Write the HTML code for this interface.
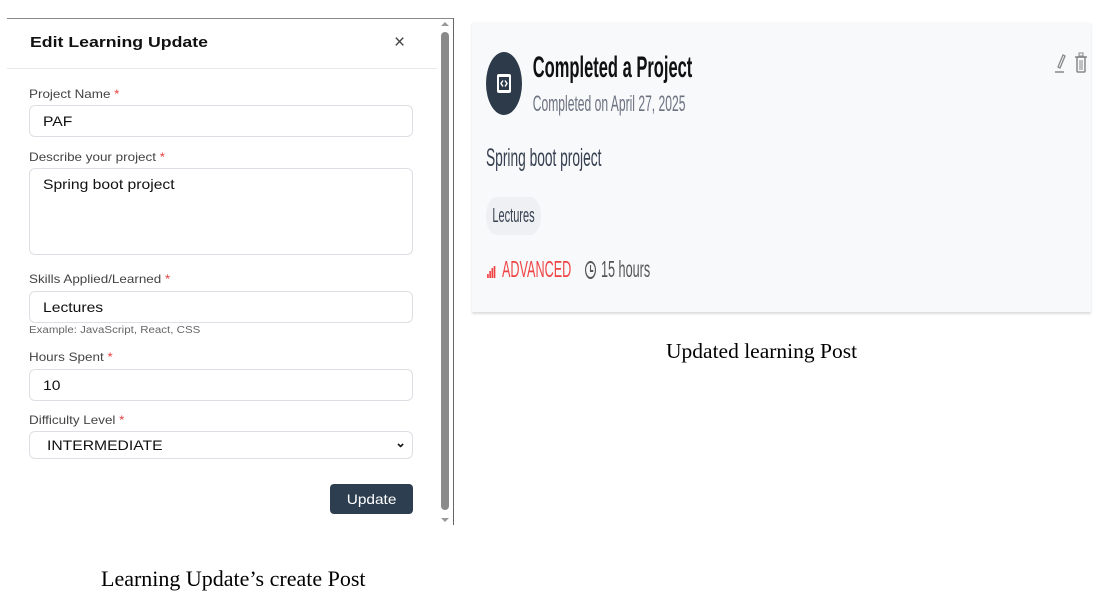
<!DOCTYPE html>
<html><head><style>
*{margin:0;padding:0;box-sizing:border-box}
body{width:1103px;height:581px;background:#fff;position:relative;overflow:hidden;font-family:"Liberation Sans",sans-serif}
.a{position:absolute}
.w{display:inline-block;transform:scaleX(1.12);transform-origin:0 0;white-space:nowrap}
.lbl{position:absolute;left:29px;font-size:12px;color:#444}
.lbl b{color:#e53e3e;font-weight:normal}
.inp{position:absolute;left:29px;width:384px;border:1px solid #dcdfe3;border-radius:6px;background:#fff;font-size:14px;color:#111;padding-left:13px}
</style></head><body>
<div class="a" style="left:7px;top:18px;width:447px;height:1px;background:#888"></div>
<div class="a" style="left:453px;top:18px;width:1px;height:507px;background:#666"></div>
<div class="a" style="left:441px;top:32px;width:8px;height:478px;background:#8a8a8a;border-radius:4px"></div>
<div class="a" style="left:441px;top:22px;width:0;height:0;border-left:4px solid transparent;border-right:4px solid transparent;border-bottom:4px solid #999"></div>
<div class="a" style="left:441px;top:518px;width:0;height:0;border-left:4px solid transparent;border-right:4px solid transparent;border-top:4px solid #999"></div>

<div class="a" style="left:30px;top:34px;font-size:15px;font-weight:bold;color:#111"><span class="w" style="transform:scaleX(1.18)">Edit Learning Update</span></div>
<div class="a" style="left:394px;top:32px;font-size:19px;color:#444">×</div>
<div class="a" style="left:7px;top:68px;width:430px;height:1px;background:#e8e8e8"></div>

<div class="lbl" style="top:87px"><span class="w">Project Name <b>*</b></span></div>
<div class="inp" style="top:105px;height:32px;line-height:30px"><span class="w">PAF</span></div>
<div class="lbl" style="top:150px"><span class="w">Describe your project <b>*</b></span></div>
<div class="inp" style="top:168px;height:87px;padding-top:7px"><span class="w">Spring boot project</span></div>
<div class="lbl" style="top:272px"><span class="w">Skills Applied/Learned <b>*</b></span></div>
<div class="inp" style="top:291px;height:32px;line-height:30px"><span class="w">Lectures</span></div>
<div class="a" style="left:29px;top:325px;font-size:10px;color:#666"><span class="w" style="transform:scaleX(1.15)">Example: JavaScript, React, CSS</span></div>
<div class="lbl" style="top:350px"><span class="w">Hours Spent <b>*</b></span></div>
<div class="inp" style="top:369px;height:32px;line-height:30px"><span class="w">10</span></div>
<div class="lbl" style="top:413px"><span class="w">Difficulty Level <b>*</b></span></div>
<div class="inp" style="top:431px;height:28px;line-height:26px;padding-left:17px"><span class="w">INTERMEDIATE</span><span style="position:absolute;right:6px;top:-2px;font-size:13px;font-weight:bold">&#8964;</span></div>
<div class="a" style="left:330px;top:484px;width:83px;height:30px;background:#2d3e50;border-radius:4px;color:#fff;font-size:14px;text-align:center;line-height:30px"><span class="w" style="transform:scaleX(1.1);transform-origin:50% 0">Update</span></div>

<div class="a" style="left:101px;top:566px;font-family:'Liberation Serif',serif;font-size:22px;color:#000;white-space:nowrap">Learning Update’s create Post</div>

<div class="a" style="left:472px;top:22px;width:619px;height:290px;background:#f8f9fb;box-shadow:0 2px 2px #ddd"></div>
<div class="a" style="left:486px;top:52px;width:36px;height:63px;border-radius:50%;background:#2d3a4a"></div>
<svg class="a" style="left:496px;top:73px" width="16" height="21" viewBox="0 0 16 21">
 <rect x="1" y="1" width="14" height="19" rx="2" fill="#fff"/>
 <rect x="3" y="4" width="10" height="13" fill="#2d3a4a"/>
 <path d="M7 7.5 L5 10.5 L7 13.5 M9 7.5 L11 10.5 L9 13.5" fill="none" stroke="#fff" stroke-width="1.4"/>
</svg>
<div class="a" style="left:486px;top:0;width:1000px;height:300px;transform:scaleX(0.55);transform-origin:0 0">
 <div class="a" style="left:85px;top:51px;font-size:30px;font-weight:bold;color:#111;white-space:nowrap">Completed a Project</div>
 <div class="a" style="left:85px;top:91px;font-size:22px;color:#6b7280;white-space:nowrap">Completed on April 27, 2025</div>
 <div class="a" style="left:0;top:144px;font-size:25px;color:#374151;white-space:nowrap">Spring boot project</div>
 <div class="a" style="left:0;top:197px;width:100px;height:38px;border-radius:20px;background:#eef0f3;font-size:20px;color:#374151;text-align:center;line-height:38px">Lectures</div>
 <div class="a" style="left:2px;top:266px;width:14px;height:12px">
  <div class="a" style="left:0;top:8px;width:3px;height:4px;background:#ef4444"></div>
  <div class="a" style="left:4px;top:5px;width:3px;height:7px;background:#ef4444"></div>
  <div class="a" style="left:8px;top:2px;width:3px;height:10px;background:#ef4444"></div>
  <div class="a" style="left:12px;top:0;width:3px;height:12px;background:#ef4444"></div>
 </div>
 <div class="a" style="left:29px;top:256px;font-size:23px;color:#ef4444;white-space:nowrap">ADVANCED</div>
 <div class="a" style="left:180px;top:261px;width:20px;height:18px;border:2px solid #555;border-radius:50%"></div>
 <div class="a" style="left:189px;top:265px;width:2px;height:6px;background:#555"></div>
 <div class="a" style="left:189px;top:270px;width:6px;height:2px;background:#555"></div>
 <div class="a" style="left:209px;top:256px;font-size:23px;color:#555;white-space:nowrap">15 hours</div>
</div>
<svg class="a" style="left:1050px;top:52px" width="40" height="24" viewBox="0 0 40 24">
 <path d="M8 15 L13 3 L15 4 L10 16 Z" fill="none" stroke="#888" stroke-width="1.3"/>
 <line x1="5" y1="20" x2="14" y2="20" stroke="#888" stroke-width="1.5"/>
 <rect x="27" y="5" width="8" height="15" rx="1" fill="none" stroke="#888" stroke-width="1.5"/>
 <line x1="25" y1="5" x2="37" y2="5" stroke="#888" stroke-width="1.5"/>
 <rect x="29" y="1" width="4" height="3" fill="none" stroke="#888" stroke-width="1"/>
 <line x1="30" y1="8" x2="30" y2="18" stroke="#888"/><line x1="32" y1="8" x2="32" y2="18" stroke="#888"/>
</svg>
<div class="a" style="left:666px;top:339px;font-family:'Liberation Serif',serif;font-size:21.5px;color:#000;white-space:nowrap">Updated learning Post</div>
</body></html>
